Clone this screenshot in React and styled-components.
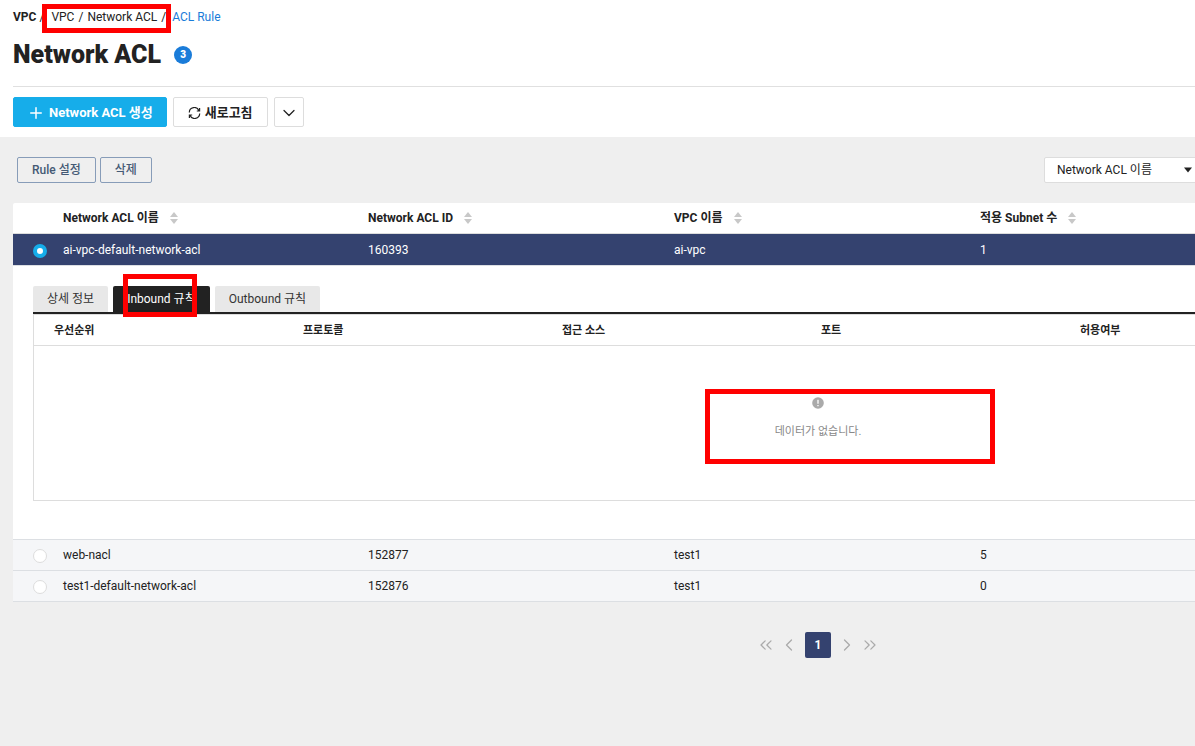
import React, { useState } from 'react'
import styled, { createGlobalStyle, css } from 'styled-components'
import { ChevronDown, ChevronLeft, ChevronRight, ChevronsLeft, ChevronsRight, Plus } from 'lucide-react'

const GlobalStyle = createGlobalStyle`
  * {
    box-sizing: border-box;
  }
  body {
    margin: 0;
    background: #efefef;
    color: #222;
    font-family: Roboto, "Noto Sans CJK KR", sans-serif;
    font-size: 12px;
    line-height: 18px;
  }
  button, select {
    font-family: inherit;
    font-size: 12px;
    line-height: 18px;
    cursor: pointer;
  }
  svg {
    flex-shrink: 0;
  }
`
const Screen = styled.div`
  overflow-x: hidden;
`
/* the console never gets narrower than this, the rest is cut at the right */
const Page = styled.div`
  min-width: 1636px;
`
const Header = styled.header`
  background: #fff;
  padding: 8px 13px 10px;
`
const Breadcrumb = styled.nav`
  display: flex;
  gap: 3px;
`
const CrumbGroup = styled.span`
  position: relative;
  display: flex;
  gap: 4px;
  margin-left: 4px;
  padding-right: 3px;
`
const CrumbRoot = styled.strong`
  font-weight: 700;
`
const CrumbLink = styled.a`
  color: ${props => (props.$current ? '#1a7cd9' : '#222')};
  text-decoration: none;
`
const Marker = styled.span`
  position: absolute;
  inset: ${props => props.$inset};
  border: 5px solid #f00;
  pointer-events: none;
`
const TitleRow = styled.div`
  display: flex;
  align-items: center;
  gap: 13px;
  height: 61px;
  padding-bottom: 3px;
  border-bottom: 1px solid #e0e0e0;
`
const Title = styled.h1`
  margin: 0;
  font-size: 25px;
  line-height: 32px;
  font-weight: 900;
`
const Count = styled.span`
  width: 18px;
  height: 18px;
  border-radius: 50%;
  background: #1a7cd9;
  color: #fff;
  font-size: 10px;
  font-weight: 900;
  text-align: center;
`
const Actions = styled.div`
  display: flex;
  gap: 6px;
  padding-top: 10px;
`
const ActionButton = styled.button`
  display: flex;
  align-items: center;
  justify-content: center;
  gap: 4px;
  height: 30px;
  padding: 1px ${props => (props.$square ? '4px' : '14px')} 0;
  border: 1px solid #ddd;
  border-radius: 2px;
  background: #fff;
  color: #222;
  font-size: 13px;
  font-weight: 700;
  ${props => props.$primary && css`
    padding: 1px 13px 0;
    border-color: #16adea;
    background: #16adea;
    color: #fff;
  `}
`
const Main = styled.main`
  padding: 20px 13px;
`
const Toolbar = styled.div`
  display: flex;
  justify-content: space-between;
  padding-left: 4px;
  margin-bottom: 20px;
`
const ToolbarGroup = styled.div`
  display: flex;
  gap: 4px;
`
const OutlineButton = styled.button`
  height: 26px;
  padding: 0 14px;
  border: 1px solid #879cb8;
  border-radius: 2px;
  background: transparent;
  color: #455a75;
  font-weight: 500;
`
const Filter = styled.div`
  width: 579px;
`
const SelectWrap = styled.div`
  display: flex;
  align-items: center;
  width: 159px;
  height: 26px;
  padding-right: 10px;
  border: 1px solid #ddd;
  border-radius: 2px;
  background: #fff;
`
const Select = styled.select`
  flex: 1;
  height: 24px;
  padding: 0 12px;
  border: 0;
  appearance: none;
  background: transparent;
  color: #222;
`
const Table = styled.table`
  width: 100%;
  table-layout: fixed;
  border-collapse: separate;
  border-spacing: 0;
  background: #fff;
  border-radius: 2px 2px 0 0;
`
const Col = styled.col`
  width: ${props => props.$width};
`
const Th = styled.th`
  height: 31px;
  padding: 0;
  border-bottom: 1px solid #ddd;
  text-align: left;
  font-weight: 700;
`
const RuleTh = styled(Th)`
  padding: 2px 0 0 20px;
`
const ThInner = styled.span`
  display: flex;
  align-items: center;
  gap: 11px;
`
const Row = styled.tr`
  background: ${props => (props.$selected ? '#34426f' : '#f5f6f8')};
  color: ${props => (props.$selected ? '#fff' : '#222')};
`
const Td = styled.td`
  height: 31px;
  padding: 0;
  border-bottom: 1px solid #dcdfe3;
`
const SelectedTd = styled(Td)`
  height: 32px;
`
const Radio = styled.input`
  display: block;
  appearance: none;
  width: 14px;
  height: 14px;
  margin: 2px 0 0 20px;
  border: 1px solid #ddd;
  border-radius: 50%;
  background: #fff;
  &:checked {
    border: 4px solid #16adea;
  }
`
const DetailCell = styled.td`
  padding: 20px 20px 38px;
  border-bottom: 1px solid #dcdfe3;
`
const Tabs = styled.div`
  display: flex;
  gap: 5px;
  border-bottom: 2px solid #222;
`
const Tab = styled.button`
  position: relative;
  height: 26px;
  padding: 0 14px;
  border: 0;
  border-radius: 2px 2px 0 0;
  background: ${props => (props.$active ? '#222' : '#e8e8e8')};
  color: ${props => (props.$active ? '#fff' : '#333')};
`
const RuleTable = styled(Table)`
  border: 1px solid #ddd;
  border-radius: 0;
  font-size: 11px;
`
const EmptyCell = styled.td`
  height: 154px;
  padding: 0 0 8px;
`
const Empty = styled.div`
  position: relative;
  display: flex;
  flex-direction: column;
  align-items: center;
  gap: 14px;
  color: #888;
`
const Pagination = styled.nav`
  display: flex;
  justify-content: center;
  align-items: center;
  gap: 7px;
  margin-top: 30px;
`
const PageButton = styled.button`
  display: flex;
  align-items: center;
  justify-content: center;
  height: 26px;
  width: ${props => (props.$current ? '26px' : '16px')};
  margin: 0 ${props => (props.$current ? '1px' : '0')};
  padding: 0;
  border: 0;
  border-radius: 2px;
  background: ${props => (props.$current ? '#34426f' : 'transparent')};
  color: ${props => (props.$current ? '#fff' : '#aaa')};
  font-weight: 700;
`

const SortIcon = () => (
  <svg width="8" height="12" viewBox="0 0 8 12" fill="#c8c8c8" aria-hidden="true">
    <path d="M4 0L8 5H0Z" />
    <path d="M4 12L8 7H0Z" />
  </svg>
)

const RefreshIcon = () => (
  <svg width="13" height="12" viewBox="0 0 13 12" fill="none" stroke="#222" strokeWidth="1.2" aria-hidden="true">
    <path d="M1.3 5.4A5 5 0 0 1 10.9 3.6M11.6 1V4H8.8" />
    <path d="M11.7 6.6A5 5 0 0 1 2.1 8.4M1.4 11V8H4.2" />
  </svg>
)

const CaretIcon = () => (
  <svg width="8" height="6" viewBox="0 0 8 6" fill="#222" aria-hidden="true">
    <path d="M0 0.5H8L4 5.5Z" />
  </svg>
)

const InfoIcon = () => (
  <svg width="12" height="12" viewBox="0 0 12 12" aria-hidden="true">
    <circle cx="6" cy="6" r="5.8" fill="#aaa" />
    <path d="M6 2.8V6.8M6 8V9.3" stroke="#fff" strokeWidth="1.3" />
  </svg>
)

const columns = ['Network ACL 이름', 'Network ACL ID', 'VPC 이름', '적용 Subnet 수']
const ruleColumns = ['우선순위', '프로토콜', '접근 소스', '포트', '허용여부']
const tabs = ['상세 정보', 'Inbound 규칙', 'Outbound 규칙']
const acls = [
  { name: 'ai-vpc-default-network-acl', id: '160393', vpc: 'ai-vpc', subnets: 1 },
  { name: 'web-nacl', id: '152877', vpc: 'test1', subnets: 5 },
  { name: 'test1-default-network-acl', id: '152876', vpc: 'test1', subnets: 0 },
]

const Detail = () => {
  const [tab, setTab] = useState('Inbound 규칙')
  return (
    <tr>
      <DetailCell colSpan={6}>
        <Tabs role="tablist">
          {tabs.map(item => (
            <Tab key={item} role="tab" aria-selected={item === tab} $active={item === tab} onClick={() => setTab(item)}>
              {item}
              {item === 'Inbound 규칙' && <Marker $inset="-12px 13px -5px 10px" />}
            </Tab>
          ))}
        </Tabs>
        <RuleTable>
          <colgroup>
            <Col $width="249px" />
            <Col $width="259px" />
            <Col $width="259px" />
            <Col $width="259px" />
            <Col />
          </colgroup>
          <thead>
            <tr>
              {ruleColumns.map(item => <RuleTh key={item}>{item}</RuleTh>)}
            </tr>
          </thead>
          <tbody>
            <tr>
              <EmptyCell colSpan={5}>
                <Empty>
                  <InfoIcon />
                  데이터가 없습니다.
                  <Marker $inset="-8px 607px -23px 671px" />
                </Empty>
              </EmptyCell>
            </tr>
          </tbody>
        </RuleTable>
      </DetailCell>
    </tr>
  )
}

const App = () => {
  const [selected, setSelected] = useState('160393')
  return (
    <Screen>
      <GlobalStyle />
      <Page>
        <Header>
          <Breadcrumb>
            <CrumbRoot>VPC</CrumbRoot>
            <span>/</span>
            <CrumbGroup>
              <CrumbLink href="#vpc">VPC</CrumbLink>
              <span>/</span>
              <CrumbLink href="#acl">Network ACL</CrumbLink>
              <span>/</span>
              <Marker $inset="-4px -2px -7px -9px" />
            </CrumbGroup>
            <CrumbLink href="#rule" $current>ACL Rule</CrumbLink>
          </Breadcrumb>
          <TitleRow>
            <Title>Network ACL</Title>
            <Count>3</Count>
          </TitleRow>
          <Actions>
            <ActionButton $primary>
              <Plus size={18} strokeWidth={2} />
              Network ACL 생성
            </ActionButton>
            <ActionButton>
              <RefreshIcon />
              새로고침
            </ActionButton>
            <ActionButton $square aria-label="더보기">
              <ChevronDown size={20} strokeWidth={1.5} />
            </ActionButton>
          </Actions>
        </Header>
        <Main>
          <Toolbar>
            <ToolbarGroup>
              <OutlineButton>Rule 설정</OutlineButton>
              <OutlineButton>삭제</OutlineButton>
            </ToolbarGroup>
            <Filter>
              <SelectWrap>
                <Select aria-label="검색 조건">
                  <option>Network ACL 이름</option>
                </Select>
                <CaretIcon />
              </SelectWrap>
            </Filter>
          </Toolbar>
          <Table>
            <colgroup>
              <Col $width="50px" />
              <Col $width="305px" />
              <Col $width="306px" />
              <Col $width="306px" />
              <Col $width="306px" />
              <Col />
            </colgroup>
            <thead>
              <tr>
                <Th />
                {columns.map(item => (
                  <Th key={item}><ThInner>{item}<SortIcon /></ThInner></Th>
                ))}
                <Th />
              </tr>
            </thead>
            <tbody>
              {acls.map(acl => {
                const open = acl.id === selected
                const Cell = open ? SelectedTd : Td
                return (
                  <React.Fragment key={acl.id}>
                    <Row $selected={open}>
                      <Cell>
                        <Radio type="radio" name="acl" aria-label={acl.name} checked={open} onChange={() => setSelected(acl.id)} />
                      </Cell>
                      <Cell>{acl.name}</Cell>
                      <Cell>{acl.id}</Cell>
                      <Cell>{acl.vpc}</Cell>
                      <Cell>{acl.subnets}</Cell>
                      <Cell />
                    </Row>
                    {open && <Detail />}
                  </React.Fragment>
                )
              })}
            </tbody>
          </Table>
          <Pagination aria-label="페이지">
            <PageButton aria-label="처음"><ChevronsLeft size={20} strokeWidth={1.5} /></PageButton>
            <PageButton aria-label="이전"><ChevronLeft size={20} strokeWidth={1.5} /></PageButton>
            <PageButton $current>1</PageButton>
            <PageButton aria-label="다음"><ChevronRight size={20} strokeWidth={1.5} /></PageButton>
            <PageButton aria-label="마지막"><ChevronsRight size={20} strokeWidth={1.5} /></PageButton>
          </Pagination>
        </Main>
      </Page>
    </Screen>
  )
}

export default App
